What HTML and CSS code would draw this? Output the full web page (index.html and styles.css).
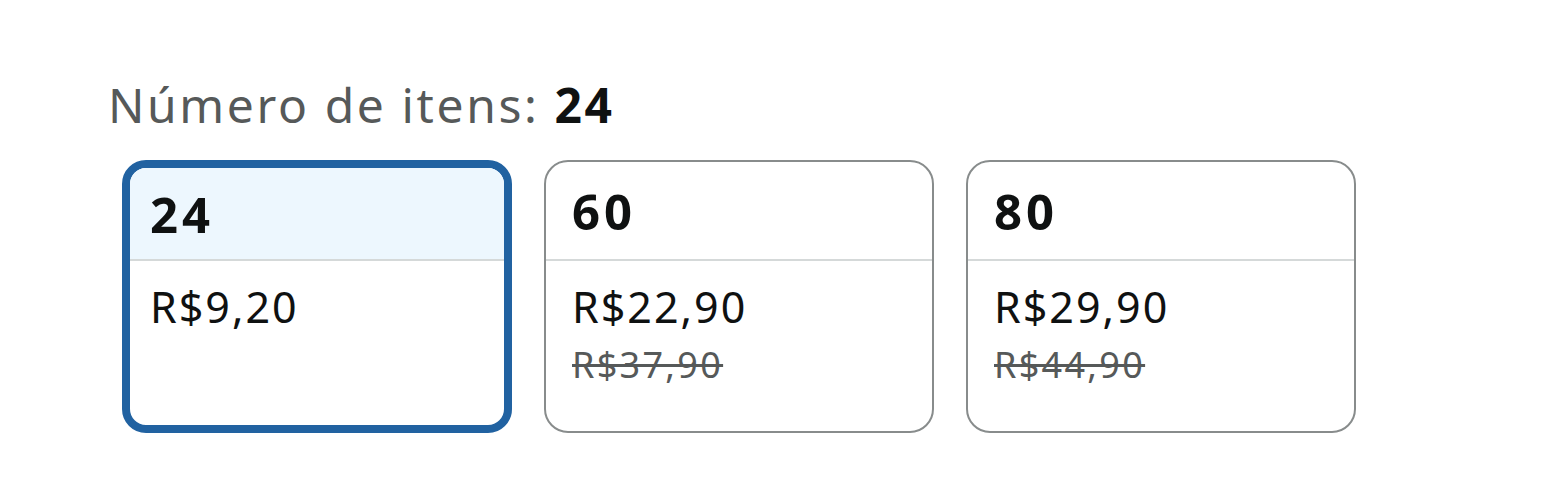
FILE: index.html
```html
<!DOCTYPE html>
<html lang="pt-BR">
<head>
    <meta charset="UTF-8">
    <meta name="viewport" content="width=device-width, initial-scale=1.0">
    <title>Número de itens</title>
    <link rel="stylesheet" href="styles.css">
</head>
<body>
    <div class="twister">
        <div class="twister-label">
            Número de itens: <span class="selection">24</span>
        </div>
        <div class="options">
            <div class="option selected">
                <div class="option-head">24</div>
                <div class="option-body">
                    <span class="price">R$9,20</span>
                </div>
            </div>
            <div class="option">
                <div class="option-head">60</div>
                <div class="option-body">
                    <span class="price">R$22,90</span>
                    <span class="list-price">R$37,90</span>
                </div>
            </div>
            <div class="option">
                <div class="option-head">80</div>
                <div class="option-body">
                    <span class="price">R$29,90</span>
                    <span class="list-price">R$44,90</span>
                </div>
            </div>
        </div>
    </div>
</body>
</html>
```

FILE: styles.css
```css
body {
    margin: 0;
    padding: 0;
    background-color: #ffffff;
    font-family: "Noto Sans", Arial, sans-serif;
    color: #0f1111;
}
.twister {
    padding: 74px 0 0 108px;
}
.twister-label {
    font-size: 48px;
    line-height: 62px;
    letter-spacing: 2.6px;
    color: #565959;
    margin-bottom: 24px;
}
.twister-label .selection {
    color: #0f1111;
    font-weight: bold;
}
.options {
    display: flex;
    gap: 32px;
    padding-left: 14px;
}
.option {
    box-sizing: border-box;
    width: 390px;
    height: 273px;
    border: 2px solid #888c8c;
    border-radius: 24px;
    overflow: hidden;
    display: flex;
    flex-direction: column;
}
.option-head {
    box-sizing: border-box;
    height: 99px;
    padding: 0 26px;
    display: flex;
    align-items: center;
    font-size: 49px;
    font-weight: bold;
    letter-spacing: 4px;
    border-bottom: 2px solid #d5d9d9;
}
.option-body {
    display: flex;
    flex-direction: column;
    padding: 16px 26px 0;
}
.price {
    font-size: 43px;
    line-height: 60px;
    letter-spacing: 2px;
}
.list-price {
    font-size: 36px;
    line-height: 46px;
    letter-spacing: 2.3px;
    margin-top: 5px;
    color: #565959;
    text-decoration: line-through;
}
.option.selected {
    border: 8px solid #2162a1;
}
.option.selected .option-head {
    height: 93px;
    padding: 0 20px;
    background-color: #edf7fe;
}
.option.selected .option-body {
    padding: 16px 20px 0;
}
```
